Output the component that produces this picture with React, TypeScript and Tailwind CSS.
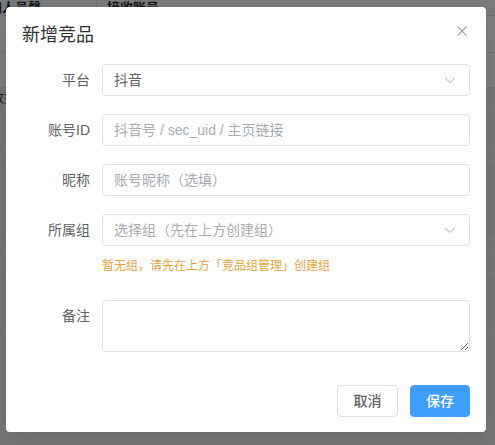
import React from "react";

const font = { fontFamily: '"Liberation Sans", "Noto Sans CJK SC", sans-serif' };

function ChevronDown() {
  return (
    <svg width="14" height="14" viewBox="0 0 1024 1024" className="text-[#a8abb2]">
      <path
        fill="currentColor"
        d="M831.872 340.864 512 652.672 192.128 340.864a30.592 30.592 0 0 0-42.752 0 29.12 29.12 0 0 0 0 41.6L489.664 714.24a32 32 0 0 0 44.672 0l340.288-331.712a29.12 29.12 0 0 0 0-41.728 30.592 30.592 0 0 0-42.752 0z"
      />
    </svg>
  );
}

function CloseIcon() {
  return (
    <svg width="16" height="16" viewBox="0 0 1024 1024" className="text-[#909399]">
      <path
        fill="currentColor"
        d="M764.288 214.592 512 466.88 259.712 214.592a31.936 31.936 0 0 0-45.12 45.12L466.752 512 214.528 764.224a31.936 31.936 0 1 0 45.12 45.184L512 557.184l252.288 252.288a31.936 31.936 0 0 0 45.12-45.12L557.12 512.064l252.288-252.352a31.936 31.936 0 1 0-45.12-45.184z"
      />
    </svg>
  );
}

function Label({ children }: { children: React.ReactNode }) {
  return (
    <div className="w-[80px] shrink-0 pr-[12px] text-right text-[14px] leading-[32px] text-[#606266]">
      {children}
    </div>
  );
}

export default function App() {
  return (
    <div className="relative w-[495px] h-[445px] overflow-hidden bg-[#eef0f3]" style={font}>
      {/* background page */}
      <div className="flex flex-col">
        <div className="flex h-[16px] items-end bg-[#f5f7fa] border-b border-[#dcdfe6] text-[13px] font-bold text-[#303133]">
          <div className="w-[121px] -ml-[24px] border-r border-[#dcdfe6] leading-[14px]">通知人员聲</div>
          <div className="pl-[10px] leading-[14px]">接收账号</div>
        </div>
        <div className="h-[37px] bg-white border-b border-[#e4e7ed]"></div>
        <div className="h-[35px] bg-white border-b border-[#e4e7ed]"></div>
        <div className="h-[20px] flex items-center text-[13px] text-[#303133] border-b border-[#e4e7ed]">
          <span className="-ml-[22px]">无数据</span>
        </div>
        <div className="h-[40px] border-b border-[#e4e7ed]"></div>
        <div className="h-[20px] border-b border-[#e4e7ed]"></div>
        <div className="h-[65px] border-b border-[#e4e7ed]"></div>
        <div className="h-[20px] border-b border-[#e4e7ed]"></div>
        <div className="h-[27px] border-b border-[#e4e7ed]"></div>
        <div className="h-[52px] border-b border-[#e4e7ed]"></div>
      </div>
      <div className="absolute inset-0 bg-black/50"></div>

      {/* dialog */}
      <div className="absolute left-[6px] top-[7px] w-[480px] rounded-[4px] bg-white p-[16px] pb-[15px] shadow-[0_12px_32px_4px_rgba(0,0,0,0.04),0_8px_20px_rgba(0,0,0,0.08)]">
        <div className="text-[18px] leading-[24px] text-[#303133]">新增竞品</div>
        <button className="absolute right-0 top-0 flex h-[48px] w-[48px] items-center justify-center">
          <CloseIcon />
        </button>

        <div className="mt-[17px] flex flex-col">
          <div className="flex mb-[18px]">
            <Label>平台</Label>
            <div className="flex h-[32px] flex-1 items-center justify-between rounded-[4px] border border-[#dcdfe6] pl-[11px] pr-[12px]">
              <span className="text-[14px] text-[#606266]">抖音</span>
              <ChevronDown />
            </div>
          </div>
          <div className="flex mb-[18px]">
            <Label>账号ID</Label>
            <div className="flex h-[32px] flex-1 items-center rounded-[4px] border border-[#dcdfe6] px-[11px]">
              <span className="text-[14px] text-[#a8abb2]">抖音号 / sec_uid / 主页链接</span>
            </div>
          </div>
          <div className="flex mb-[18px]">
            <Label>昵称</Label>
            <div className="flex h-[32px] flex-1 items-center rounded-[4px] border border-[#dcdfe6] px-[11px]">
              <span className="text-[14px] text-[#a8abb2]">账号昵称（选填）</span>
            </div>
          </div>
          <div className="flex mb-[24px]">
            <Label>所属组</Label>
            <div className="flex flex-1 flex-col">
              <div className="flex h-[32px] items-center justify-between rounded-[4px] border border-[#dcdfe6] pl-[11px] pr-[12px]">
                <span className="text-[14px] text-[#a8abb2]">选择组（先在上方创建组）</span>
                <ChevronDown />
              </div>
              <div className="mt-[10px] text-[12px] leading-[20px] text-[#e6a23c]">
                暂无组，请先在上方「竞品组管理」创建组
              </div>
            </div>
          </div>
          <div className="flex">
            <Label>备注</Label>
            <textarea
              rows={2}
              className="h-[52px] flex-1 resize-y rounded-[4px] border border-[#dcdfe6] px-[11px] py-[5px] text-[14px] outline-none"
            />
          </div>
        </div>

        <div className="mt-[33px] flex justify-end gap-[12px]">
          <button className="h-[32px] w-[61px] rounded-[4px] border border-[#dcdfe6] bg-white text-[14px] font-medium text-[#606266]">
            取消
          </button>
          <button className="h-[32px] w-[60px] rounded-[4px] border border-[#409eff] bg-[#409eff] text-[14px] font-medium text-white">
            保存
          </button>
        </div>
      </div>
    </div>
  );
}
